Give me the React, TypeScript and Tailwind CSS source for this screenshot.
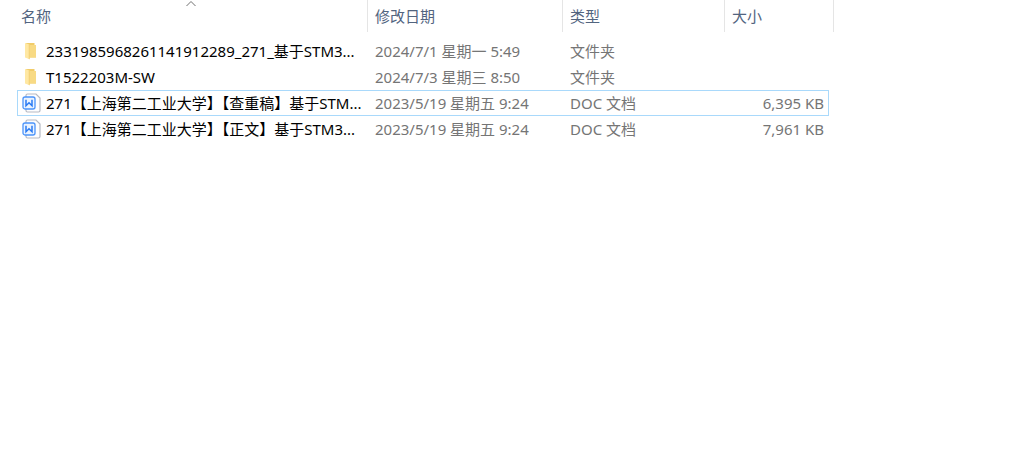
type FileEntry = {
  name: string;
  modified: string;
  type: string;
  size: string;
  kind: "folder" | "doc";
  focused?: boolean;
};

const files: FileEntry[] = [
  { name: "2331985968261141912289_271_基于STM3...", modified: "2024/7/1 星期一 5:49", type: "文件夹", size: "", kind: "folder" },
  { name: "T1522203M-SW", modified: "2024/7/3 星期三 8:50", type: "文件夹", size: "", kind: "folder" },
  { name: "271【上海第二工业大学】【查重稿】基于STM...", modified: "2023/5/19 星期五 9:24", type: "DOC 文档", size: "6,395 KB", kind: "doc", focused: true },
  { name: "271【上海第二工业大学】【正文】基于STM3...", modified: "2023/5/19 星期五 9:24", type: "DOC 文档", size: "7,961 KB", kind: "doc" },
];

function FolderIcon() {
  return (
    <svg className="size-5 shrink-0" viewBox="0 0 20 20" aria-hidden="true">
      <path d="M4 2h8.500v2H14v12.500H6z" fill="#f1cc69" />
      <path d="M7 4h7v12.500H7z" fill="#f8da84" />
      <path d="M3 2l4.600 1.600V18.200L3 16.500z" fill="#ffe8a3" />
      <path d="M7.600 3.600V18.200l-.8-.3V3.300z" fill="#efca68" />
    </svg>
  );
}

function DocIcon() {
  return (
    <svg className="size-5 shrink-0" viewBox="0 0 20 20" fill="none" aria-hidden="true">
      <path d="M4 4V2.500Q4 1 5.500 1H14l4 4v12.500q0 1.500-1.500 1.500h-11Q4 19 4 17.500V15" fill="#fdfdfe" stroke="#b5b9c3" strokeWidth="1.200" />
      <rect x="1" y="4" width="12" height="12" rx="2" fill="#eaf3ff" stroke="#4b94fa" strokeWidth="1.300" />
      <path d="M4 6.700v6L7 9.700l3 3v-6" stroke="#2b7bf3" strokeWidth="1.500" />
    </svg>
  );
}

function FileRow({ file }: { file: FileEntry }) {
  const edge = file.focused ? "border-[#a9d9fb]" : "border-transparent";
  return (
    <tr className="h-[26px] text-[#757575]">
      <td className={`border-y border-l p-0 pl-1 ${edge}`}>
        <div className="flex items-center gap-1 text-black">
          {file.kind === "folder" ? <FolderIcon /> : <DocIcon />}
          <span>{file.name}</span>
        </div>
      </td>
      <td className={`border-y p-0 pl-[7px] ${edge}`}>{file.modified}</td>
      <td className={`border-y p-0 pl-[7px] ${edge}`}>{file.type}</td>
      <td className={`border-y border-r p-0 pr-1 text-right ${edge}`}>{file.size}</td>
    </tr>
  );
}

export default function App() {
  return (
    <main className="min-h-screen overflow-x-auto bg-white pl-[17px] font-['Noto_Sans','Noto_Sans_CJK_SC',sans-serif] text-[15px] leading-5">
      <table className="table-fixed border-separate border-spacing-0 whitespace-nowrap">
        <colgroup>
          <col className="w-[351px]" />
          <col className="w-[195px]" />
          <col className="w-[162px]" />
          <col className="w-[104px]" />
          <col className="w-[5px]" />
        </colgroup>
        <thead>
          <tr className="h-8 text-left text-[#52647f]">
            <th aria-sort="ascending" className="relative border-r border-[#e5e5e5] p-0 pl-1 font-normal">
              名称
              <svg className="absolute top-0 left-1/2 h-2 w-3 -translate-x-1/2" viewBox="0 0 12 8" fill="none" aria-hidden="true">
                <path d="M.500 6L5 1.500 9.500 6" stroke="#707070" />
              </svg>
            </th>
            <th className="border-r border-[#e5e5e5] p-0 pl-[7px] font-normal">修改日期</th>
            <th className="border-r border-[#e5e5e5] p-0 pl-[7px] font-normal">类型</th>
            <th colSpan={2} className="border-r border-[#e5e5e5] p-0 pl-[7px] font-normal">大小</th>
          </tr>
        </thead>
        <tbody>
          <tr aria-hidden="true" className="h-1.5">
            <td colSpan={5} className="p-0" />
          </tr>
          {files.map((file) => (
            <FileRow key={file.name} file={file} />
          ))}
        </tbody>
      </table>
    </main>
  );
}
